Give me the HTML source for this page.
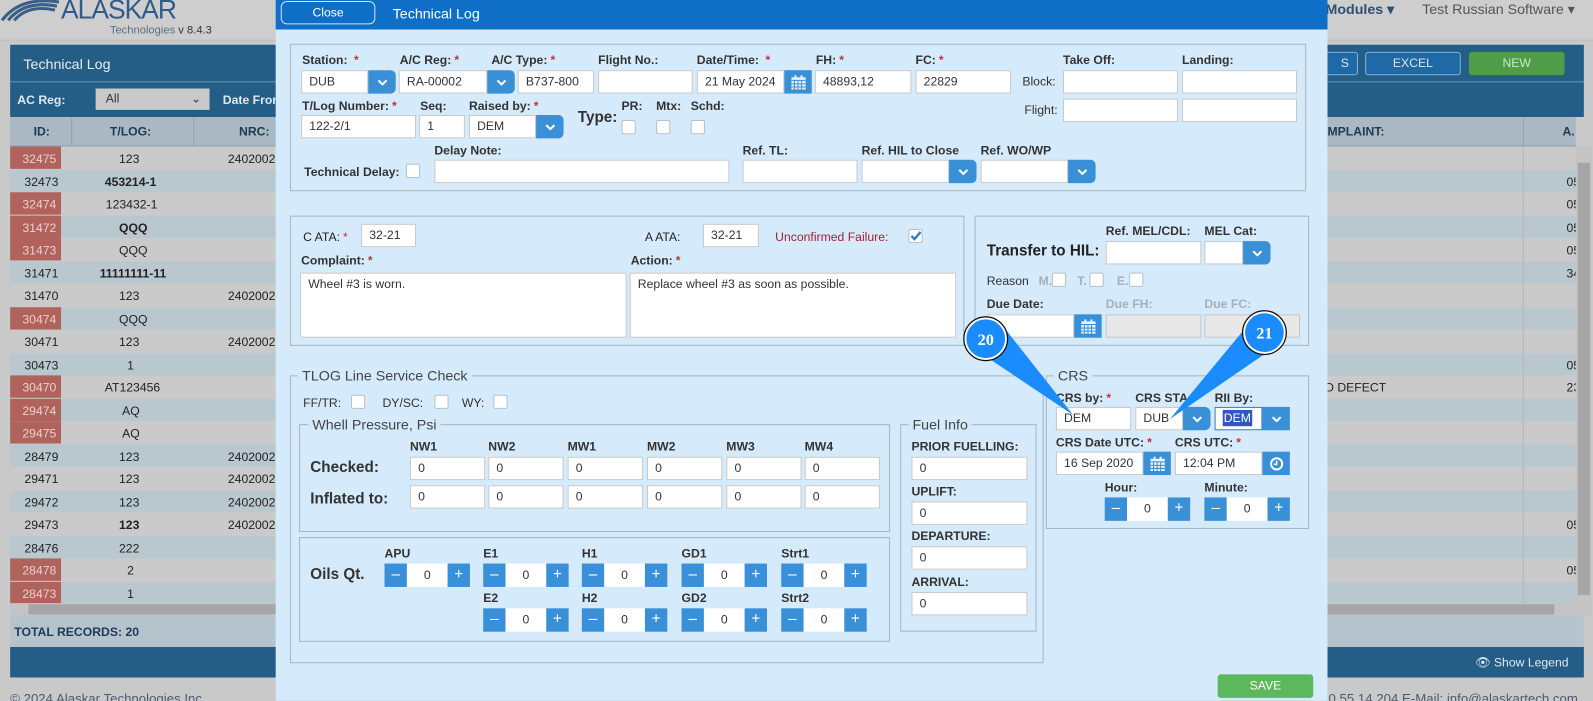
<!DOCTYPE html>
<html><head><meta charset="utf-8"><style>
*{box-sizing:border-box;margin:0;padding:0}
body{width:1593px;height:701px;overflow:hidden;background:#c9c9c9;font-family:"Liberation Sans",sans-serif;position:relative}
#s{position:absolute;left:0;top:0;width:1566px;height:689px;transform:scale(1.01724);transform-origin:0 0;overflow:hidden}
.a{position:absolute}
.l{position:absolute;font-size:12px;font-weight:bold;color:#333;white-space:nowrap}
.l i{color:#d0283c;font-style:normal;margin-left:3px}
.in{position:absolute;background:#fff;border:1px solid #c8c8c8;font-size:12px;color:#333;padding-left:7px;line-height:21px;height:23px;white-space:nowrap}
.b{position:absolute;background:#3a90d6;height:23px;width:27px;display:flex;align-items:center;justify-content:center}
.cb{position:absolute;width:14px;height:14px;background:#fff;border:1px solid #b8c0c8;border-radius:2px}
.fs{position:absolute;border:1px solid #a9b5bf}
.lg{position:absolute;background:#d5eafa;padding:0 4px;font-size:14px;color:#444}
.row{position:absolute;left:10px;width:1539px;height:22.5px;font-size:12px;color:#222}
.row span{position:absolute;top:5px}
.sp{position:absolute;height:23px;width:84px}
.sp .m,.sp .p{position:absolute;top:0;width:22px;height:23px;background:#3a90d6;color:#fff;font-size:15px;text-align:center;line-height:22px}
.sp .m{left:0}.sp .p{right:0}
.sp .v{position:absolute;left:22px;right:22px;top:0;height:23px;background:#fff;font-size:12px;text-align:center;line-height:23px;color:#333}
</style></head><body><div id="s">

<!-- background page -->
<div class="a" style="left:0;top:0;width:1566px;height:40px;background:#cecece;border-bottom:1px solid #bdbdbd"></div>
<svg class="a" style="left:0;top:0" width="60" height="22"><path d="M2 20 Q20 -4 58 2 M8 20 Q24 0 56 6 M14 20 Q28 4 54 10" stroke="#3a5f86" stroke-width="3" fill="none"/></svg>
<div class="a" style="left:60px;top:-6px;font-size:26px;color:#2f5b8a;letter-spacing:-1px">ALASKAR</div>
<div class="a" style="left:108px;top:24px;font-size:11px;color:#5b6f85">Technologies <span style="color:#333">v 8.4.3</span></div>
<div class="a" style="left:1303px;top:1px;font-size:14px;font-weight:bold;color:#2c4f74">Modules ▾</div>
<div class="a" style="left:1398px;top:1px;font-size:14px;color:#555">Test Russian Software ▾</div>

<div class="a" style="left:10px;top:44px;width:1547px;height:36px;background:#245d86"></div>
<div class="a" style="left:23px;top:55px;font-size:14px;color:#e6eef5">Technical Log</div>
<div class="a" style="left:1280px;top:51px;width:55px;height:23px;border:1px solid #7fb3dc;border-radius:3px;background:#1f6aa6;color:#d7e7f5;font-size:12px;text-align:right;padding-right:8px;line-height:21px">S</div>
<div class="a" style="left:1342px;top:51px;width:94px;height:23px;border:1px solid #7fb3dc;border-radius:3px;background:#1f6aa6;color:#d7e7f5;font-size:12px;text-align:center;line-height:21px">EXCEL</div>
<div class="a" style="left:1444px;top:51px;width:94px;height:23px;border-radius:3px;background:#4f9c49;color:#cfe8cc;font-size:12px;text-align:center;line-height:23px">NEW</div>
<div class="a" style="left:10px;top:80px;width:1547px;height:35px;background:#245d86;border-top:1px solid #5a8fb5"></div>
<div class="a" style="left:17px;top:91px;font-size:12px;font-weight:bold;color:#dfe9f2">AC Reg:</div>
<div class="a" style="left:94px;top:87px;width:112px;height:21px;background:#c9c9c9;font-size:12px;color:#333;padding-left:10px;line-height:21px">All<span style="position:absolute;right:8px">⌄</span></div>
<div class="a" style="left:219px;top:91px;font-size:12px;font-weight:bold;color:#dfe9f2">Date From</div>
<div class="a" style="left:10px;top:115px;width:1539px;height:29px;background:#a9b8c3;border-bottom:1px solid #8fa2b0"></div>
<div class="a" style="left:70px;top:115px;width:1px;height:29px;background:#8fa2b0"></div>
<div class="a" style="left:190px;top:115px;width:1px;height:29px;background:#8fa2b0"></div>
<div class="a" style="left:1497px;top:115px;width:1px;height:29px;background:#8fa2b0"></div>
<div class="a" style="left:33px;top:122px;font-size:12px;font-weight:bold;color:#1f3a55">ID:</div>
<div class="a" style="left:108px;top:122px;font-size:12px;font-weight:bold;color:#1f3a55">T/LOG:</div>
<div class="a" style="left:235px;top:122px;font-size:12px;font-weight:bold;color:#1f3a55">NRC:</div>
<div class="a" style="left:1305px;top:122px;font-size:12px;font-weight:bold;color:#1f3a55">MPLAINT:</div>
<div class="a" style="left:1536px;top:122px;font-size:12px;font-weight:bold;color:#1f3a55">A.</div>

<div id="rows"></div>
<div class="row" style="top:144px;background:#cacaca"><span style="left:0;top:0;width:50px;height:22px;background:#b0625c"></span><span style="left:12px;color:#ecd0cd">32475</span><span style="left:107px">123</span><span style="left:214px">2402002</span></div>
<div class="row" style="top:166.5px;background:#b9c7cf"><span style="left:14px">32473</span><span style="left:93px;font-weight:bold">453214-1</span><span style="left:1530px">05</span></div>
<div class="row" style="top:189px;background:#cacaca"><span style="left:0;top:0;width:50px;height:22px;background:#b0625c"></span><span style="left:12px;color:#ecd0cd">32474</span><span style="left:94px">123432-1</span><span style="left:1530px">05</span></div>
<div class="row" style="top:211.5px;background:#b9c7cf"><span style="left:0;top:0;width:50px;height:22px;background:#b0625c"></span><span style="left:12px;color:#ecd0cd">31472</span><span style="left:107px;font-weight:bold">QQQ</span><span style="left:1530px">05</span></div>
<div class="row" style="top:234px;background:#cacaca"><span style="left:0;top:0;width:50px;height:22px;background:#b0625c"></span><span style="left:12px;color:#ecd0cd">31473</span><span style="left:107px">QQQ</span><span style="left:1530px">05</span></div>
<div class="row" style="top:256.5px;background:#b9c7cf"><span style="left:14px">31471</span><span style="left:88px;font-weight:bold">11111111-11</span><span style="left:1530px">34</span></div>
<div class="row" style="top:279px;background:#cacaca"><span style="left:14px">31470</span><span style="left:107px">123</span><span style="left:214px">2402002</span></div>
<div class="row" style="top:301.5px;background:#b9c7cf"><span style="left:0;top:0;width:50px;height:22px;background:#b0625c"></span><span style="left:12px;color:#ecd0cd">30474</span><span style="left:107px">QQQ</span></div>
<div class="row" style="top:324px;background:#cacaca"><span style="left:14px">30471</span><span style="left:107px">123</span><span style="left:214px">2402002</span></div>
<div class="row" style="top:346.5px;background:#b9c7cf"><span style="left:14px">30473</span><span style="left:115px">1</span><span style="left:1530px">05</span></div>
<div class="row" style="top:369px;background:#cacaca"><span style="left:0;top:0;width:50px;height:22px;background:#b0625c"></span><span style="left:12px;color:#ecd0cd">30470</span><span style="left:93px">AT123456</span><span style="left:1284px">ND DEFECT</span><span style="left:1530px">23</span></div>
<div class="row" style="top:391.5px;background:#b9c7cf"><span style="left:0;top:0;width:50px;height:22px;background:#b0625c"></span><span style="left:12px;color:#ecd0cd">29474</span><span style="left:110px">AQ</span></div>
<div class="row" style="top:414px;background:#cacaca"><span style="left:0;top:0;width:50px;height:22px;background:#b0625c"></span><span style="left:12px;color:#ecd0cd">29475</span><span style="left:110px">AQ</span></div>
<div class="row" style="top:436.5px;background:#b9c7cf"><span style="left:14px">28479</span><span style="left:107px">123</span><span style="left:214px">2402002</span></div>
<div class="row" style="top:459px;background:#cacaca"><span style="left:14px">29471</span><span style="left:107px">123</span><span style="left:214px">2402002</span></div>
<div class="row" style="top:481.5px;background:#b9c7cf"><span style="left:14px">29472</span><span style="left:107px">123</span><span style="left:214px">2402002</span></div>
<div class="row" style="top:504px;background:#cacaca"><span style="left:14px">29473</span><span style="left:107px;font-weight:bold">123</span><span style="left:214px">2402002</span><span style="left:1530px">05</span></div>
<div class="row" style="top:526.5px;background:#b9c7cf"><span style="left:14px">28476</span><span style="left:107px">222</span></div>
<div class="row" style="top:549px;background:#cacaca"><span style="left:0;top:0;width:50px;height:22px;background:#b0625c"></span><span style="left:12px;color:#ecd0cd">28478</span><span style="left:115px">2</span><span style="left:1530px">05</span></div>
<div class="row" style="top:571.5px;background:#b9c7cf;height:21px"><span style="left:0;top:0;width:50px;height:21px;background:#b0625c"></span><span style="left:12px;color:#ecd0cd">28473</span><span style="left:115px">1</span></div>
<div class="a" style="left:1497px;top:144px;width:1px;height:449px;background:#b0b8bd"></div>
<div class="a" style="left:10px;top:593px;width:1539px;height:12px;background:#c4c4c4"></div>
<div class="a" style="left:28px;top:594px;width:1500px;height:10px;background:#a6a6a6"></div>
<div class="a" style="left:1549px;top:143px;width:16px;height:462px;background:#c4c4c4"></div>
<div class="a" style="left:1551px;top:160px;width:12px;height:425px;background:#a6a6a6"></div>
<div class="a" style="left:10px;top:605px;width:1547px;height:31px;background:#b5c3cd"></div>
<div class="a" style="left:14px;top:614px;font-size:12px;font-weight:bold;color:#1f3a55">TOTAL RECORDS: 20</div>
<div class="a" style="left:10px;top:636px;width:1547px;height:30px;background:#245d86"></div>
<div class="a" style="left:1450px;top:644px;font-size:12px;color:#dfe9f2">👁 Show Legend</div>
<div class="a" style="left:10px;top:679px;font-size:13px;color:#4a5a70">© 2024 Alaskar Technologies Inc.</div>
<div class="a" style="left:1306px;top:679px;font-size:13px;color:#4a5a70">0.55.14.204 E-Mail: info@alaskartech.com</div>

<!-- modal -->
<div class="a" style="left:271px;top:0;width:1034px;height:689px;background:#d5eafa"></div>
<div class="a" style="left:271px;top:0;width:1034px;height:29px;background:#0f6fc6"></div>
<div class="a" style="left:276px;top:1px;width:93px;height:23px;border:1px solid #cfe3f5;border-radius:6px;color:#fff;font-size:12px;text-align:center;line-height:20px">Close</div>
<div class="a" style="left:386px;top:5px;font-size:14px;color:#fff">Technical Log</div>

<!-- fieldset 1 -->
<div class="fs" style="left:285px;top:43px;width:999px;height:145px"></div>
<div class="l" style="left:297px;top:52px">Station: <i>*</i></div>
<div class="l" style="left:393px;top:52px">A/C Reg:<i>*</i></div>
<div class="l" style="left:483px;top:52px">A/C Type:<i>*</i></div>
<div class="l" style="left:588px;top:52px">Flight No.:</div>
<div class="l" style="left:685px;top:52px">Date/Time: <i>*</i></div>
<div class="l" style="left:802px;top:52px">FH:<i>*</i></div>
<div class="l" style="left:900px;top:52px">FC:<i>*</i></div>
<div class="l" style="left:1045px;top:52px">Take Off:</div>
<div class="l" style="left:1162px;top:52px">Landing:</div>
<div class="in" style="left:296px;top:69px;width:66px">DUB</div>
<div class="b" style="left:362px;top:69px;border-radius:0 5px 5px 0"><svg width="10" height="6"><path d="M1 1l4 4 4-4" stroke="#fff" stroke-width="2" fill="none"/></svg></div>
<div class="in" style="left:392px;top:69px;width:87px">RA-00002</div>
<div class="b" style="left:479px;top:69px;border-radius:0 5px 5px 0"><svg width="10" height="6"><path d="M1 1l4 4 4-4" stroke="#fff" stroke-width="2" fill="none"/></svg></div>
<div class="in" style="left:509px;top:69px;width:75px">B737-800</div>
<div class="in" style="left:588px;top:69px;width:93px"></div>
<div class="in" style="left:685px;top:69px;width:86px">21 May 2024</div>
<div class="b" style="left:771px;top:69px"><svg width="16" height="16"><rect x="1" y="3" width="14" height="12" fill="#e8f2fb"/><rect x="4" y="1" width="2" height="4" fill="#e8f2fb"/><rect x="10" y="1" width="2" height="4" fill="#e8f2fb"/><path d="M1 6h14M4 6v9M7.5 6v9M11 6v9M1 9.5h14M1 12.5h14" stroke="#3a90d6" stroke-width="1"/></svg></div>
<div class="in" style="left:801px;top:69px;width:95px">48893,12</div>
<div class="in" style="left:900px;top:69px;width:94px">22829</div>
<div class="a" style="left:1005px;top:73px;font-size:12px;color:#333">Block:</div>
<div class="a" style="left:1007px;top:101px;font-size:12px;color:#333">Flight:</div>
<div class="in" style="left:1045px;top:69px;width:113px"></div>
<div class="in" style="left:1162px;top:69px;width:113px"></div>
<div class="in" style="left:1045px;top:97px;width:113px"></div>
<div class="in" style="left:1162px;top:97px;width:113px"></div>
<div class="l" style="left:297px;top:97px">T/Log Number:<i>*</i></div>
<div class="l" style="left:413px;top:97px">Seq:</div>
<div class="l" style="left:461px;top:97px">Raised by:<i>*</i></div>
<div class="in" style="left:296px;top:113px;width:113px">122-2/1</div>
<div class="in" style="left:412px;top:113px;width:45px">1</div>
<div class="in" style="left:461px;top:113px;width:66px">DEM</div>
<div class="b" style="left:527px;top:113px;border-radius:0 5px 5px 0"><svg width="10" height="6"><path d="M1 1l4 4 4-4" stroke="#fff" stroke-width="2" fill="none"/></svg></div>
<div class="a" style="left:568px;top:107px;font-size:15px;font-weight:bold;color:#333">Type:</div>
<div class="l" style="left:611px;top:97px">PR:</div>
<div class="l" style="left:645px;top:97px">Mtx:</div>
<div class="l" style="left:679px;top:97px">Schd:</div>
<div class="cb" style="left:611px;top:118px"></div>
<div class="cb" style="left:645px;top:118px"></div>
<div class="cb" style="left:679px;top:118px"></div>
<div class="l" style="left:299px;top:162px">Technical Delay:</div>
<div class="cb" style="left:399px;top:161px"></div>
<div class="l" style="left:427px;top:141px">Delay Note:</div>
<div class="in" style="left:427px;top:157px;width:290px"></div>
<div class="l" style="left:730px;top:141px">Ref. TL:</div>
<div class="in" style="left:730px;top:157px;width:113px"></div>
<div class="l" style="left:847px;top:141px">Ref. HIL to Close</div>
<div class="in" style="left:847px;top:157px;width:86px"></div>
<div class="b" style="left:933px;top:157px;border-radius:0 5px 5px 0"><svg width="10" height="6"><path d="M1 1l4 4 4-4" stroke="#fff" stroke-width="2" fill="none"/></svg></div>
<div class="l" style="left:964px;top:141px">Ref. WO/WP</div>
<div class="in" style="left:964px;top:157px;width:86px"></div>
<div class="b" style="left:1050px;top:157px;border-radius:0 5px 5px 0"><svg width="10" height="6"><path d="M1 1l4 4 4-4" stroke="#fff" stroke-width="2" fill="none"/></svg></div>

<!-- fieldset 2 -->
<div class="fs" style="left:285px;top:212px;width:663px;height:128px"></div>
<div class="l" style="left:298px;top:226px;font-weight:normal;color:#222">C ATA:<i>*</i></div>
<div class="in" style="left:355px;top:220px;width:54px">32-21</div>
<div class="l" style="left:634px;top:226px;font-weight:normal;color:#222">A ATA:</div>
<div class="in" style="left:691px;top:220px;width:55px">32-21</div>
<div class="a" style="left:762px;top:226px;font-size:12px;color:#a0233a">Unconfirmed Failure:</div>
<div class="cb" style="left:893px;top:225px"><svg width="12" height="12" style="position:absolute;left:0;top:0"><path d="M2 6l3 3 6-7" stroke="#3a7fc4" stroke-width="2.4" fill="none"/></svg></div>
<div class="l" style="left:296px;top:249px">Complaint:<i>*</i></div>
<div class="l" style="left:620px;top:249px">Action:<i>*</i></div>
<div class="in" style="left:295px;top:268px;width:321px;height:64px;padding-top:2px;line-height:16px">Wheel #3 is worn.</div>
<div class="in" style="left:619px;top:268px;width:321px;height:64px;padding-top:2px;line-height:16px">Replace wheel #3 as soon as possible.</div>

<!-- fieldset 3 -->
<div class="fs" style="left:958px;top:212px;width:329px;height:128px"></div>
<div class="a" style="left:970px;top:238px;font-size:15px;font-weight:bold;color:#222">Transfer to HIL:</div>
<div class="l" style="left:1087px;top:220px">Ref. MEL/CDL:</div>
<div class="l" style="left:1184px;top:220px">MEL Cat:</div>
<div class="in" style="left:1087px;top:237px;width:94px"></div>
<div class="in" style="left:1184px;top:237px;width:38px"></div>
<div class="b" style="left:1222px;top:237px;border-radius:0 5px 5px 0"><svg width="10" height="6"><path d="M1 1l4 4 4-4" stroke="#fff" stroke-width="2" fill="none"/></svg></div>
<div class="a" style="left:970px;top:269px;font-size:12px;color:#333">Reason</div>
<div class="l" style="left:1021px;top:269px;color:#a6b0b8">M.</div><div class="cb" style="left:1034px;top:268px"></div>
<div class="l" style="left:1059px;top:269px;color:#a6b0b8">T.</div><div class="cb" style="left:1071px;top:268px"></div>
<div class="l" style="left:1098px;top:269px;color:#a6b0b8">E.</div><div class="cb" style="left:1110px;top:268px"></div>
<div class="l" style="left:970px;top:292px">Due Date:</div>
<div class="l" style="left:1087px;top:292px;color:#a6b0b8">Due FH:</div>
<div class="l" style="left:1184px;top:292px;color:#a6b0b8">Due FC:</div>
<div class="in" style="left:970px;top:309px;width:86px"></div>
<div class="b" style="left:1056px;top:309px"><svg width="16" height="16"><rect x="1" y="3" width="14" height="12" fill="#e8f2fb"/><rect x="4" y="1" width="2" height="4" fill="#e8f2fb"/><rect x="10" y="1" width="2" height="4" fill="#e8f2fb"/><path d="M1 6h14M4 6v9M7.5 6v9M11 6v9M1 9.5h14M1 12.5h14" stroke="#3a90d6" stroke-width="1"/></svg></div>
<div class="in" style="left:1087px;top:309px;width:94px;background:#e8e8e8"></div>
<div class="in" style="left:1184px;top:309px;width:94px;background:#e8e8e8"></div>

<!-- fieldset TLOG -->
<div class="fs" style="left:285px;top:369px;width:741px;height:283px"></div>
<div class="lg" style="left:293px;top:361px">TLOG Line Service Check</div>
<div class="a" style="left:298px;top:389px;font-size:12px;color:#333">FF/TR:</div><div class="cb" style="left:345px;top:388px"></div>
<div class="a" style="left:376px;top:389px;font-size:12px;color:#333">DY/SC:</div><div class="cb" style="left:427px;top:388px"></div>
<div class="a" style="left:454px;top:389px;font-size:12px;color:#333">WY:</div><div class="cb" style="left:485px;top:388px"></div>

<div class="fs" style="left:294px;top:417px;width:581px;height:106px"></div>
<div class="lg" style="left:303px;top:409px">Whell Pressure, Psi</div>
<div class="l" style="left:403px;top:432px">NW1</div><div class="l" style="left:480px;top:432px">NW2</div><div class="l" style="left:558px;top:432px">MW1</div><div class="l" style="left:636px;top:432px">MW2</div><div class="l" style="left:714px;top:432px">MW3</div><div class="l" style="left:791px;top:432px">MW4</div>
<div class="a" style="left:305px;top:451px;font-size:15px;font-weight:bold;color:#333">Checked:</div>
<div class="a" style="left:305px;top:482px;font-size:15px;font-weight:bold;color:#333">Inflated to:</div>
<div class="in" style="left:403px;top:449px;width:74px">0</div><div class="in" style="left:480px;top:449px;width:74px">0</div><div class="in" style="left:558px;top:449px;width:74px">0</div><div class="in" style="left:636px;top:449px;width:74px">0</div><div class="in" style="left:714px;top:449px;width:74px">0</div><div class="in" style="left:791px;top:449px;width:74px">0</div>
<div class="in" style="left:403px;top:477px;width:74px">0</div><div class="in" style="left:480px;top:477px;width:74px">0</div><div class="in" style="left:558px;top:477px;width:74px">0</div><div class="in" style="left:636px;top:477px;width:74px">0</div><div class="in" style="left:714px;top:477px;width:74px">0</div><div class="in" style="left:791px;top:477px;width:74px">0</div>

<div class="fs" style="left:294px;top:528px;width:581px;height:103px"></div>
<div class="a" style="left:305px;top:556px;font-size:15px;font-weight:bold;color:#333">Oils Qt.</div>
<div class="l" style="left:378px;top:537px">APU</div><div class="l" style="left:475px;top:537px">E1</div><div class="l" style="left:572px;top:537px">H1</div><div class="l" style="left:670px;top:537px">GD1</div><div class="l" style="left:768px;top:537px">Strt1</div>
<div class="l" style="left:475px;top:581px">E2</div><div class="l" style="left:572px;top:581px">H2</div><div class="l" style="left:670px;top:581px">GD2</div><div class="l" style="left:768px;top:581px">Strt2</div>
<div class="sp" style="left:378px;top:554px"><div class="m">–</div><div class="v">0</div><div class="p">+</div></div>
<div class="sp" style="left:475px;top:554px"><div class="m">–</div><div class="v">0</div><div class="p">+</div></div>
<div class="sp" style="left:572px;top:554px"><div class="m">–</div><div class="v">0</div><div class="p">+</div></div>
<div class="sp" style="left:670px;top:554px"><div class="m">–</div><div class="v">0</div><div class="p">+</div></div>
<div class="sp" style="left:768px;top:554px"><div class="m">–</div><div class="v">0</div><div class="p">+</div></div>
<div class="sp" style="left:475px;top:598px"><div class="m">–</div><div class="v">0</div><div class="p">+</div></div>
<div class="sp" style="left:572px;top:598px"><div class="m">–</div><div class="v">0</div><div class="p">+</div></div>
<div class="sp" style="left:670px;top:598px"><div class="m">–</div><div class="v">0</div><div class="p">+</div></div>
<div class="sp" style="left:768px;top:598px"><div class="m">–</div><div class="v">0</div><div class="p">+</div></div>

<div class="fs" style="left:885px;top:417px;width:134px;height:204px"></div>
<div class="lg" style="left:893px;top:409px">Fuel Info</div>
<div class="l" style="left:896px;top:432px">PRIOR FUELLING:</div><div class="in" style="left:896px;top:449px;width:114px">0</div>
<div class="l" style="left:896px;top:476px">UPLIFT:</div><div class="in" style="left:896px;top:493px;width:114px">0</div>
<div class="l" style="left:896px;top:520px">DEPARTURE:</div><div class="in" style="left:896px;top:537px;width:114px">0</div>
<div class="l" style="left:896px;top:565px">ARRIVAL:</div><div class="in" style="left:896px;top:582px;width:114px">0</div>

<!-- CRS -->
<div class="fs" style="left:1028px;top:369px;width:259px;height:151px"></div>
<div class="lg" style="left:1036px;top:361px">CRS</div>
<div class="l" style="left:1038px;top:384px">CRS by:<i>*</i></div>
<div class="l" style="left:1116px;top:384px">CRS STA:</div>
<div class="l" style="left:1194px;top:384px">RII By:</div>
<div class="in" style="left:1038px;top:400px;width:74px">DEM</div>
<div class="in" style="left:1116px;top:400px;width:47px">DUB</div>
<div class="b" style="left:1163px;top:400px;border-radius:0 6px 6px 0"><svg width="10" height="6"><path d="M1 1l4 4 4-4" stroke="#fff" stroke-width="2" fill="none"/></svg></div>
<div class="in" style="left:1194px;top:400px;width:47px;border-color:#3a78c8"><span style="background:#3257c4;color:#fff;padding:1px 1px">DEM</span></div>
<div class="b" style="left:1241px;top:400px"><svg width="10" height="6"><path d="M1 1l4 4 4-4" stroke="#fff" stroke-width="2" fill="none"/></svg></div>
<div class="l" style="left:1038px;top:428px">CRS Date UTC:<i>*</i></div>
<div class="l" style="left:1155px;top:428px">CRS UTC:<i>*</i></div>
<div class="in" style="left:1038px;top:444px;width:86px">16 Sep 2020</div>
<div class="b" style="left:1124px;top:444px"><svg width="16" height="16"><rect x="1" y="3" width="14" height="12" fill="#e8f2fb"/><rect x="4" y="1" width="2" height="4" fill="#e8f2fb"/><rect x="10" y="1" width="2" height="4" fill="#e8f2fb"/><path d="M1 6h14M4 6v9M7.5 6v9M11 6v9M1 9.5h14M1 12.5h14" stroke="#3a90d6" stroke-width="1"/></svg></div>
<div class="in" style="left:1155px;top:444px;width:86px">12:04 PM</div>
<div class="b" style="left:1241px;top:444px"><svg width="14" height="14"><circle cx="7" cy="7" r="5.5" stroke="#fff" stroke-width="2" fill="none"/><path d="M7 4v3.5h-2.5" stroke="#fff" stroke-width="1.6" fill="none"/></svg></div>
<div class="l" style="left:1086px;top:472px">Hour:</div>
<div class="l" style="left:1184px;top:472px">Minute:</div>
<div class="sp" style="left:1086px;top:489px"><div class="m">–</div><div class="v">0</div><div class="p">+</div></div>
<div class="sp" style="left:1184px;top:489px"><div class="m">–</div><div class="v">0</div><div class="p">+</div></div>

<!-- callouts -->
<svg class="a" style="left:940px;top:300px" width="340" height="130">
<polygon points="18,43 47,22 115,108" fill="#1a8cff"/>
<polygon points="283,24 312,42 210,112" fill="#1a8cff"/>
<circle cx="29" cy="33" r="20" fill="#1a8cff" stroke="#fff" stroke-width="2"/>
<circle cx="29" cy="33" r="21.5" fill="none" stroke="#111" stroke-width="1.2"/>
<circle cx="303" cy="27" r="20" fill="#1a8cff" stroke="#fff" stroke-width="2"/>
<circle cx="303" cy="27" r="21.5" fill="none" stroke="#111" stroke-width="1.2"/>
<text x="29" y="39" text-anchor="middle" font-family="Liberation Serif" font-weight="bold" font-size="16" fill="#fff">20</text>
<text x="303" y="33" text-anchor="middle" font-family="Liberation Serif" font-weight="bold" font-size="16" fill="#fff">21</text>
</svg>

<div class="a" style="left:1197px;top:663px;width:94px;height:23px;background:#5cb85c;border-radius:3px;color:#fff;font-size:12px;text-align:center;line-height:23px">SAVE</div>
</div></body></html>
